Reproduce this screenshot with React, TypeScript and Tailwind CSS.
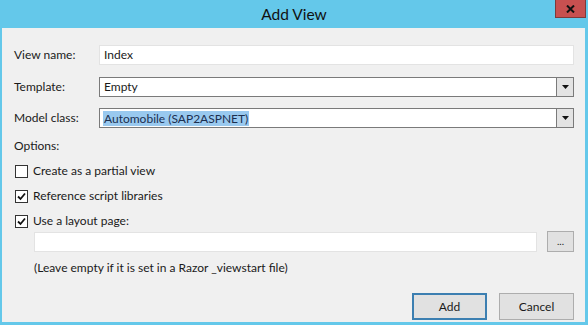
import React from 'react';

const font = { fontFamily: 'Lato, "Noto Sans", "Liberation Sans", sans-serif' };

function Check({ checked }: { checked?: boolean }) {
  return (
    <span className="w-[13px] h-[13px] border border-[#333333] bg-white flex items-center justify-center shrink-0">
      {checked && (
        <svg width="9" height="9" viewBox="0 0 9 9">
          <path d="M1 4.5 L3.5 7 L8 1.5" fill="none" stroke="#111" strokeWidth="1.8" />
        </svg>
      )}
    </span>
  );
}

function Select({ value, selected }: { value: string; selected?: boolean }) {
  return (
    <div className="flex-1 h-[20px] flex border border-[#7a7a7a] bg-white">
      <div className="flex-1 flex items-center pl-[3px]">
        <span className={selected ? 'bg-[#99c9ef] text-[#1c2f4f] leading-[15px] px-[1px]' : 'px-[1px]'}>{value}</span>
      </div>
      <div className="w-[17px] border-l border-[#7a7a7a] bg-[#e3e3e3] flex items-center justify-center">
        <svg width="7" height="4" viewBox="0 0 7 4">
          <path d="M0 0 L7 0 L3.5 4 Z" fill="#111" />
        </svg>
      </div>
    </div>
  );
}

export default function App() {
  return (
    <div className="w-[588px] h-[325px] bg-[#64c8ea] flex flex-col text-[12px] text-[#1a1a1a]" style={font}>
      {/* Title bar */}
      <div className="h-[28px] relative flex items-center justify-center">
        <span className="text-[15.5px] text-[#111] mt-[1px]">Add View</span>
        <div className="absolute right-[2px] top-0 w-[31px] h-[18px] bg-[#c75050] border border-t-0 border-[#7d3a3a] flex items-center justify-center">
          <svg width="9" height="8" viewBox="0 0 9 8">
            <path d="M1 0.5 L8 7.5 M8 0.5 L1 7.5" stroke="#111" strokeWidth="2" />
          </svg>
        </div>
      </div>

      {/* Client area */}
      <div className="flex-1 ml-[2px] mr-[3px] mb-[3px] bg-[#f0f0f0] pl-[12px] pr-[11px] pt-[17px] flex flex-col">
        <div className="flex items-center">
          <span className="w-[85px]">View name:</span>
          <div className="flex-1 h-[20px] bg-white border border-[#e3e3e3] flex items-center pl-[4px]">Index</div>
        </div>
        <div className="flex items-center mt-[12px]">
          <span className="w-[85px]">Template:</span>
          <Select value="Empty" />
        </div>
        <div className="flex items-center mt-[11px]">
          <span className="w-[85px]">Model class:</span>
          <Select value="Automobile (SAP2ASPNET)" selected />
        </div>

        <div className="mt-[10px] h-[16px] leading-[16px]">Options:</div>

        <div className="flex flex-col gap-[9px] mt-[9px] pl-[1px]">
          <label className="flex items-center gap-[5px] h-[16px]">
            <Check />
            <span>Create as a partial view</span>
          </label>
          <label className="flex items-center gap-[5px] h-[16px]">
            <Check checked />
            <span>Reference script libraries</span>
          </label>
          <label className="flex items-center gap-[5px] h-[16px]">
            <Check checked />
            <span>Use a layout page:</span>
          </label>
        </div>

        <div className="flex items-center mt-[2px] pl-[20px]">
          <div className="w-[503px] h-[20px] bg-white border border-[#e3e3e3]" />
          <div className="ml-[10px] w-[27px] h-[21px] bg-[#e1e1e1] border border-[#adadad] flex items-center justify-center text-[10px] leading-none pb-[2px]">...</div>
        </div>
        <div className="pl-[20px] mt-[8px] h-[16px] leading-[16px]">(Leave empty if it is set in a Razor _viewstart file)</div>

        <div className="flex justify-end gap-[12px] mt-[17px]">
          <button className="w-[75px] h-[27px] bg-[#e1e1e1] border border-[#3c7fb1] outline outline-1 outline-[#3c7fb1] -outline-offset-2">Add</button>
          <button className="w-[75px] h-[27px] bg-[#e1e1e1] border border-[#adadad]">Cancel</button>
        </div>
      </div>
    </div>
  );
}
